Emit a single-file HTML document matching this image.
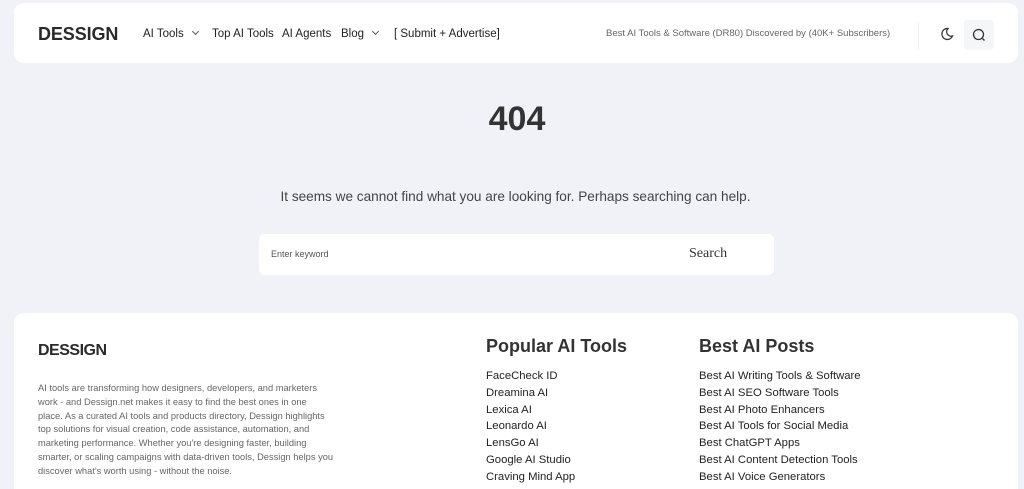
<!DOCTYPE html>
<html><head><meta charset="utf-8"><style>
*{margin:0;padding:0;box-sizing:border-box}
html,body{width:1024px;height:489px;overflow:hidden}
body{background:#f0f2f7;font-family:"Liberation Sans",sans-serif;color:#222;position:relative}
.hdr{position:absolute;left:14px;top:3px;width:1004px;height:60px;background:#fff;border-radius:10px}
.logo{position:absolute;left:24px;top:21px;font-size:18px;font-weight:bold;color:#2a2a2a;letter-spacing:-0.1px}
.nav{position:absolute;top:25px;font-size:11.5px;color:#222}
.chev{display:inline-block;width:5px;height:5px;border-right:1.2px solid #555;border-bottom:1.2px solid #555;transform:rotate(45deg);margin-left:9px;position:relative;top:-3px}
.tag{position:absolute;left:592px;top:25px;font-size:9.5px;color:#666}
.sep{position:absolute;left:904px;top:20px;width:1px;height:26px;background:#eee}
.sbtn{position:absolute;left:950px;top:17px;width:30px;height:30px;background:#f5f6f8;border-radius:4px}
h1{position:absolute;left:0;width:1034px;text-align:center;top:100px;font-size:34px;font-weight:bold;color:#333}
.msg{position:absolute;left:0;width:1031px;text-align:center;top:189px;font-size:13.6px;color:#444}
.search{position:absolute;left:259px;top:234px;width:515px;height:41px;background:#fff;border-radius:6px}
.search .ph{position:absolute;left:12px;top:15px;font-size:9px;color:#555}
.search .b{position:absolute;left:430px;top:12px;font-size:14px;font-family:"Liberation Serif",serif;color:#333}
.ft{position:absolute;left:14px;top:313px;width:1004px;height:190px;background:#fff;border-radius:10px}
.flogo{position:absolute;left:24px;top:29px;font-size:16px;font-weight:bold;color:#2a2a2a;letter-spacing:-0.5px}
.fdesc{position:absolute;left:24px;top:69px;width:296px;font-size:9.3px;line-height:13.8px;color:#666}
.col{position:absolute;top:23px}
.col h3{font-size:18px;font-weight:bold;color:#333;margin-bottom:11px}
.col div{font-size:11.3px;line-height:16.8px;color:#222}
</style></head><body>
<div class="hdr">
<div class="logo">DESSIGN</div>
<div class="nav" style="left:129px">AI Tools<span class="chev"></span></div>
<div class="nav" style="left:198px">Top AI Tools</div>
<div class="nav" style="left:268px">AI Agents</div>
<div class="nav" style="left:327px">Blog<span class="chev"></span></div>
<div class="nav" style="left:380px">[ Submit + Advertise]</div>
<div class="tag">Best AI Tools &amp; Software (DR80) Discovered by (40K+ Subscribers)</div>
<div class="sep"></div>
<svg style="position:absolute;left:926px;top:24px" width="14" height="14" viewBox="0 0 14 14"><path d="M8 1.5A5.5 5.5 0 1 0 12.5 9 4.5 4.5 0 0 1 8 1.5Z" fill="none" stroke="#333" stroke-width="1.3"/></svg>
<div class="sbtn"><svg style="position:absolute;left:8px;top:8px" width="14" height="14" viewBox="0 0 14 14"><circle cx="6.5" cy="6.5" r="5" fill="none" stroke="#333" stroke-width="1.3"/><path d="M10.5 10.5L12.5 12.5" stroke="#333" stroke-width="1.3"/></svg></div>
</div>
<h1>404</h1>
<div class="msg">It seems we cannot find what you are looking for. Perhaps searching can help.</div>
<div class="search"><div class="ph">Enter keyword</div><div class="b">Search</div></div>
<div class="ft">
<div class="flogo">DESSIGN</div>
<div class="fdesc">AI tools are transforming how designers, developers, and marketers work - and Dessign.net makes it easy to find the best ones in one place. As a curated AI tools and products directory, Dessign highlights top solutions for visual creation, code assistance, automation, and marketing performance. Whether you're designing faster, building smarter, or scaling campaigns with data-driven tools, Dessign helps you discover what's worth using - without the noise.</div>
<div class="col" style="left:472px"><h3>Popular AI Tools</h3>
<div>FaceCheck ID</div><div>Dreamina AI</div><div>Lexica AI</div><div>Leonardo AI</div><div>LensGo AI</div><div>Google AI Studio</div><div>Craving Mind App</div></div>
<div class="col" style="left:685px"><h3>Best AI Posts</h3>
<div>Best AI Writing Tools &amp; Software</div><div>Best AI SEO Software Tools</div><div>Best AI Photo Enhancers</div><div>Best AI Tools for Social Media</div><div>Best ChatGPT Apps</div><div>Best AI Content Detection Tools</div><div>Best AI Voice Generators</div></div>
</div>
</body></html>
